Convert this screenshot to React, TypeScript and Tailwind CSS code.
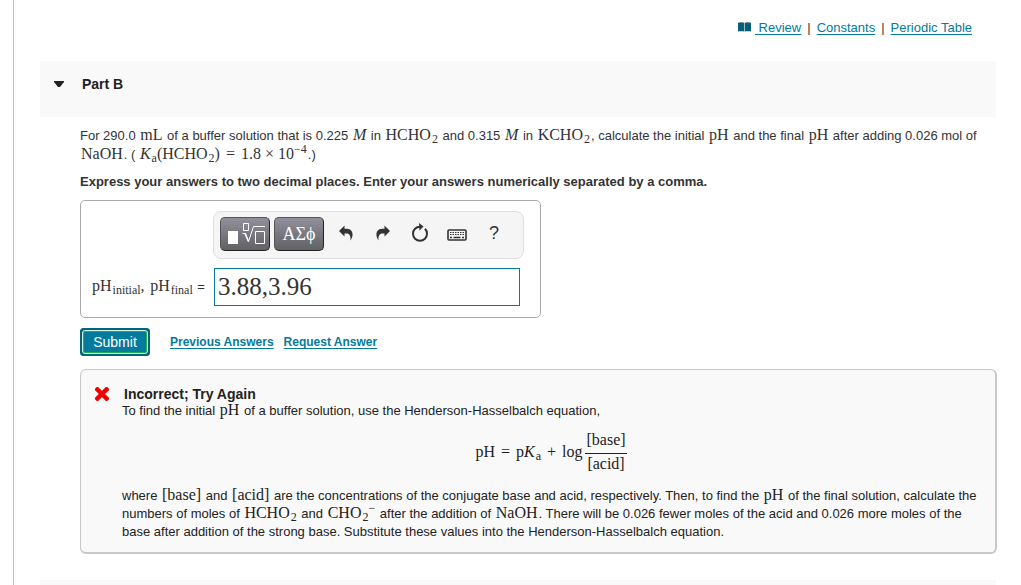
import type { ReactNode } from 'react';

const resourceLinks = ['Constants', 'Periodic Table'];

function Tex({ children }: { children: ReactNode }) {
    return <span className="px-px font-['Liberation_Serif',serif] text-[16px] leading-none whitespace-nowrap">{children}</span>;
}

function Sub({ children }: { children: ReactNode }) {
    return <sub className="pl-px text-[12px] leading-none">{children}</sub>;
}

function Op({ children }: { children: ReactNode }) {
    return <span className="mx-[6px]">{children}</span>;
}

function ToolButton({ label, children }: { label: string; children: ReactNode }) {
    return (
        <button aria-label={label} className="flex h-8 w-6 items-center justify-center text-[#333]">
            {children}
        </button>
    );
}

function Header() {
    return (
        <header className="flex h-[61px] items-start justify-end pt-5 pr-6 text-[13px] leading-4">
            <svg className="mt-[2px] mr-1 h-[10px] w-[13px] fill-[#075e76]" viewBox="0 0 13 10">
                <path d="M0 .7C2 0 4.500 0 6.200 .7V9.600C4.500 9 2.500 9 0 9.600ZM6.800 .7C8.500 0 11 0 13 .7V9.600C10.500 9 8.500 9 6.800 9.600Z" />
            </svg>
            <a href="#review" className="whitespace-pre text-[#047a9c] underline underline-offset-2"> Review</a>
            {resourceLinks.map((name) => (
                <span key={name} className="flex">
                    <span className="mx-[6px]">|</span>
                    <a href="#resource" className="text-[#047a9c] underline underline-offset-2">{name}</a>
                </span>
            ))}
        </header>
    );
}

function AnswerBox() {
    return (
        <div className="mt-[10px] h-[118px] w-[461px] rounded-[5px] border border-[#aaa] pt-[10px] pl-[10px]">
            {/* Equation toolbar */}
            <div className="ml-[122px] flex h-12 w-[311px] items-start rounded-lg border border-[#dfdfdf] bg-[#f5f5f5] pt-[5px] pl-[6px]">
                <button aria-label="Templates" className="flex h-[34px] w-[50px] items-center justify-center rounded-[5px] border border-t-[#555] border-r-[#222] border-b-[#222] border-l-[#555] bg-linear-to-b from-[#92909b] to-[#626166]">
                    <svg className="h-[26px] w-[40px]" viewBox="0 0 40 26" fill="none" stroke="white">
                        <path d="M3 10h10v13H3z" fill="white" stroke="none" />
                        <path d="M18.500 2.500h5v7h-5zM30.500 10.500h9v12h-9z" />
                        <path d="M17.500 12.500h3l3 8L28.500 5.500H40" />
                        <path d="M20 12.500l3.500 8" strokeWidth="1.500" />
                    </svg>
                </button>
                <button className="ml-1 h-[34px] w-[50px] rounded-[5px] border border-t-[#555] border-r-[#222] border-b-[#222] border-l-[#555] bg-linear-to-b from-[#92909b] to-[#626166] font-['Liberation_Serif',serif] text-[18px] leading-none text-white">
                    ΑΣϕ
                </button>
                <div className="ml-[10px] flex gap-[13px]">
                    <ToolButton label="Undo">
                        <svg className="h-4 w-[14px] fill-current" viewBox="0 0 14 16">
                            <path d="M0 6L5.500 .5V3.800H8C11.500 3.800 14 6.600 13.500 10.500C13.300 12.500 12.300 14.300 11.300 15.500C12.200 11.200 10.500 8.500 7.500 8.500H5.500V11.500Z" />
                        </svg>
                    </ToolButton>
                    <ToolButton label="Redo">
                        <svg className="h-4 w-[14px] fill-current" viewBox="0 0 14 16">
                            <path d="M14 6L8.500 .5V3.800H6C2.500 3.800 0 6.600 .5 10.500C.7 12.500 1.700 14.300 2.700 15.500C1.800 11.200 3.500 8.500 6.500 8.500H8.500V11.500Z" />
                        </svg>
                    </ToolButton>
                    <ToolButton label="Reset">
                        <svg className="h-5 w-[18px]" viewBox="0 0 18 20" fill="none">
                            <path d="M14 5.800A7 7 0 1 1 4 5.800C5.300 4.500 7 3.700 9 3.700" stroke="currentColor" strokeWidth="2" />
                            <path d="M8 0L12.500 3.500L8.500 7.500Z" fill="currentColor" />
                        </svg>
                    </ToolButton>
                    <ToolButton label="Keyboard shortcuts">
                        <svg className="mt-1 h-3 w-5" viewBox="0 0 20 12" fill="none" stroke="currentColor">
                            <rect x="1" y="1" width="18" height="10" rx="1" strokeWidth="1.600" />
                            <path d="M3 3.500h14M3 5.500h14" strokeDasharray="1.500 1" />
                            <path d="M3 8.500h2M6.500 8.500h7M15 8.500h2" strokeWidth="1.500" />
                        </svg>
                    </ToolButton>
                    <ToolButton label="Help">
                        <span className="text-[18px] leading-none">?</span>
                    </ToolButton>
                </div>
            </div>

            <div className="mt-[9px] flex items-center">
                <label htmlFor="answer" className="w-[123px] shrink-0 text-[13px] whitespace-nowrap">
                    <Tex>pH<Sub>initial</Sub>,</Tex> <Tex>pH<Sub>final</Sub></Tex> =
                </label>
                <input
                    id="answer"
                    defaultValue="3.88,3.96"
                    className="h-[38px] w-[306px] border border-[#047a9c] px-[3px] font-['Liberation_Serif',serif] text-[25px] text-[#333] outline-none"
                />
            </div>
        </div>
    );
}

function Feedback() {
    return (
        <section className="mt-[13px] -mr-px rounded-[6px] border border-r-2 border-b-2 border-[#c8c8c8] bg-[#f9f9f9] pt-4 pr-4 pb-[11px] pl-[41px] text-[13px] leading-4 text-[#222]">
            <div className="-ml-[27px] flex items-center">
                <svg className="mr-[15px] size-[14px]" viewBox="0 0 14 14">
                    <path d="M2.500 2.500L11.500 11.500M11.500 2.500L2.500 11.500" stroke="#e00" strokeWidth="4.500" strokeLinecap="square" strokeLinejoin="round" />
                </svg>
                <h3 className="text-[14px] leading-4 font-bold">Incorrect; Try Again</h3>
            </div>
            <p>To find the initial <Tex>pH</Tex> of a buffer solution, use the Henderson-Hasselbalch equation,</p>

            {/* Henderson-Hasselbalch */}
            <div className="mt-3 flex h-[42px] items-center justify-center">
                <Tex>pH<Op>=</Op>p<i>K</i><Sub>a</Sub><Op>+</Op>log</Tex>
                <span className="ml-[2px] flex flex-col text-center">
                    <span className="border-b border-[#222] pb-1"><Tex>[base]</Tex></span>
                    <span className="pt-[2px]"><Tex>[acid]</Tex></span>
                </span>
            </div>

            <p className="mt-[14px] leading-[18px]">
                where <Tex>[base]</Tex> and <Tex>[acid]</Tex> are the concentrations of the conjugate base and acid, respectively. Then, to find the <Tex>pH</Tex> of the final solution, calculate the numbers of moles of <Tex>HCHO<Sub>2</Sub></Tex> and <Tex>CHO<Sub>2</Sub><sup className="text-[12px] leading-none">−</sup></Tex> after the addition of <Tex>NaOH</Tex>. There will be 0.026 fewer moles of the acid and 0.026 more moles of the base after addition of the strong base. Substitute these values into the Henderson-Hasselbalch equation.
            </p>
        </section>
    );
}

export default function App() {
    return (
        <div className="min-h-screen bg-white pl-[13px] font-['Liberation_Sans',Arial,sans-serif] text-[#333]">
            <main className="flex min-h-screen flex-col border-l border-[#b9c3cf] pr-[25px] pl-[26px]">
                <Header />
                <div className="flex h-14 items-start bg-[#f9f9f9] pt-[15px] pl-[14px]">
                    <button aria-expanded="true" className="flex items-center text-[14px] leading-4 font-bold text-[#222]">
                        <svg className="mr-[18px] h-[6px] w-[10px] fill-current" viewBox="0 0 10 6">
                            <path d="M0 0H10V1L6 6H4L0 1Z" />
                        </svg>
                        Part B
                    </button>
                </div>

                <div className="pl-10 text-[13px]">
                    <p className="mt-[9px] leading-[19px]">
                        For 290.0 <Tex>mL</Tex> of a buffer solution that is 0.225 <Tex><i>M</i></Tex> in <Tex>HCHO<Sub>2</Sub></Tex> and 0.315 <Tex><i>M</i></Tex> in <Tex>KCHO<Sub>2</Sub></Tex>, calculate the initial <Tex>pH</Tex> and the final <Tex>pH</Tex> after adding 0.026 mol of <Tex>NaOH</Tex>. ( <Tex><i>K</i><Sub>a</Sub>(HCHO<Sub>2</Sub>)<Op>=</Op>1.8 × 10<sup className="text-[12px] leading-none">−4</sup></Tex>.)
                    </p>
                    <p className="mt-[10px] leading-4 font-bold">
                        Express your answers to two decimal places. Enter your answers numerically separated by a comma.
                    </p>
                    <AnswerBox />
                    <div className="mt-[10px] flex items-center text-[12px] leading-4 font-bold">
                        <button className="h-7 w-[70px] rounded-[3px] border border-[#04647f] bg-[#04647f] p-px text-[14px] font-normal text-white">
                            <span className="flex h-full items-center justify-center rounded-[3px] border border-[#d5f2dc] bg-[#047a9c] inset-ring inset-ring-[#22b045]">
                                Submit
                            </span>
                        </button>
                        <a href="#previous" className="ml-5 text-[#047a9c] underline underline-offset-2">Previous Answers</a>
                        <a href="#request" className="ml-[10px] text-[#047a9c] underline underline-offset-2">Request Answer</a>
                    </div>
                    <Feedback />
                </div>

                <div className="mt-[26px] flex-1 bg-[#f9f9f9]" />
            </main>
        </div>
    );
}
